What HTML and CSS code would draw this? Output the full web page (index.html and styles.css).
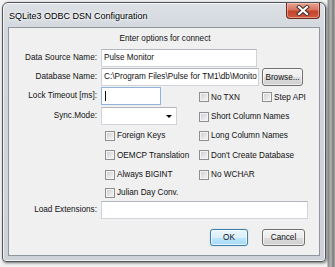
FILE: index.html
```html
<!DOCTYPE html>
<html>
<head>
<meta charset="utf-8">
<link rel="stylesheet" href="styles.css">
</head>
<body>
<div class="window">
  <div class="titlebar">
    <span class="title">SQLite3 ODBC DSN Configuration</span>
    <div class="close">
      <svg width="14" height="11" viewBox="0 0 14 11">
        <path d="M3 2 L11 9 M11 2 L3 9" stroke="#3a2a28" stroke-width="4" stroke-linecap="square"/>
        <path d="M3 2 L11 9 M11 2 L3 9" stroke="#ffffff" stroke-width="2.2" stroke-linecap="square"/>
      </svg>
    </div>
  </div>
  <div class="client">
    <div class="heading">Enter options for connect</div>
    <div class="form">
      <div class="lbl">Data Source Name:</div>
      <div class="field span3"><div class="input w-dsn">Pulse Monitor</div></div>

      <div class="lbl">Database Name:</div>
      <div class="field span3"><div class="input w-db">C:\Program Files\Pulse for TM1\db\Monito</div><div class="btn browse">Browse...</div></div>

      <div class="lbl">Lock Timeout [ms]:</div>
      <div class="field"><div class="input w-lock focus"><span class="caret"></span></div></div>
      <div class="cb"><span class="box"></span>No TXN</div>
      <div class="cb"><span class="box"></span>Step API</div>

      <div class="lbl">Sync.Mode:</div>
      <div class="field"><div class="input select"><span class="arrow"></span></div></div>
      <div class="cb span2"><span class="box"></span>Short Column Names</div>

      <div class="lbl"></div>
      <div class="cb indent"><span class="box"></span>Foreign Keys</div>
      <div class="cb span2"><span class="box"></span>Long Column Names</div>

      <div class="lbl"></div>
      <div class="cb indent"><span class="box"></span>OEMCP Translation</div>
      <div class="cb span2"><span class="box"></span>Don't Create Database</div>

      <div class="lbl"></div>
      <div class="cb indent"><span class="box"></span>Always BIGINT</div>
      <div class="cb span2"><span class="box"></span>No WCHAR</div>

      <div class="lbl"></div>
      <div class="cb indent span3"><span class="box"></span>Julian Day Conv.</div>

      <div class="lbl">Load Extensions:</div>
      <div class="field span3"><div class="input w-ext"></div></div>
    </div>
    <div class="buttons">
      <div class="btn ok">OK</div>
      <div class="btn cancel">Cancel</div>
    </div>
  </div>
</div>
</body>
</html>
```

FILE: styles.css
```css
* { box-sizing: border-box; }
html, body { margin: 0; }
body {
  width: 335px;
  height: 267px;
  padding: 2px 0 0 2px;
  background: linear-gradient(to right, #f2f2f2 0, #f2f2f2 327px, #8e8e8e 328px, #b5b5b5 331px, #7a7a7a 333px, #a8a8a8 335px);
  font-family: "Liberation Sans", Arial, sans-serif;
  font-size: 8.2px;
  color: #111;
  overflow: hidden;
}
.window {
  width: 324px;
  height: 260px;
  border: 1px solid #50555c;
  border-radius: 6px 6px 4px 4px;
  background: linear-gradient(to bottom, #dde1e6 0, #d2d7dd 30px, #cdd2d8 100%);
  box-shadow: inset 0 0 0 1px rgba(255,255,255,0.7), 1px 1px 3px rgba(0,0,0,0.55);
  padding: 0 5px 5px 5px;
  display: flex;
  flex-direction: column;
}
.titlebar {
  height: 24px;
  display: flex;
  align-items: flex-start;
  padding-left: 1px;
}
.title {
  font-family: "Liberation Sans", Arial, sans-serif;
  font-size: 9px;
  line-height: 12px;
  margin-top: 7px;
  color: #000;
  text-shadow: 0 0 5px #fff, 0 0 3px #fff;
}
.close {
  margin-left: auto;
  width: 34px;
  height: 16px;
  border: 1px solid #6e2a1e;
  border-top: none;
  border-radius: 0 0 4px 4px;
  background: linear-gradient(to bottom, #e8a493 0, #d7735e 45%, #c2442c 55%, #cf5a3f 100%);
  box-shadow: inset 0 0 0 1px rgba(255,210,200,0.5);
  display: flex;
  align-items: center;
  justify-content: center;
}
.close svg { display: block; }
.client {
  flex: 1;
  border: 1px solid #8f969e;
  background: #f0f0f0;
  display: flex;
  flex-direction: column;
}
.heading {
  margin-top: 5px;
  line-height: 12px;
  height: 12px;
  text-align: center;
  padding-left: 2px;
}
.form {
  margin-top: 4px;
  display: grid;
  grid-template-columns: 92px 98px 63px 1fr;
  grid-template-rows: 19px 19px 20px 19px 19px 20px 19px 17px 18px;
}
.lbl {
  text-align: right;
  padding-right: 4px;
  line-height: 18px;
  white-space: nowrap;
}
.field { display: flex; align-items: flex-start; }
.span2 { grid-column: span 2; }
.span3 { grid-column: span 3; }
.input {
  height: 18px;
  background: #fff;
  border: 1px solid #d0d4da;
  border-top-color: #b3b6bc;
  line-height: 16px;
  padding-left: 2px;
  white-space: nowrap;
  overflow: hidden;
  position: relative;
}
.w-dsn { width: 156px; }
.w-db { width: 158px; }
.w-lock { width: 60px; }
.w-ext { width: 207px; }
.focus { border-color: #8fb3da; }
.caret {
  position: absolute;
  left: 3px;
  top: 3px;
  width: 1px;
  height: 10px;
  background: #000;
}
.select { width: 76px; }
.arrow {
  position: absolute;
  right: 4px;
  top: 7px;
  width: 0;
  height: 0;
  border-left: 3px solid transparent;
  border-right: 3px solid transparent;
  border-top: 3px solid #000;
}
.cb {
  display: flex;
  align-items: center;
  white-space: nowrap;
  height: 100%;
}
.indent { padding-left: 4px; }
.box {
  width: 10px;
  height: 10px;
  border: 1px solid #8e8f8f;
  background: linear-gradient(135deg, #c9ccd1 0, #e6e7e9 60%, #f7f7f7 100%);
  box-shadow: inset 0 0 0 1px #f3f3f3;
  margin-right: 2px;
  flex: none;
}
.btn {
  border: 1px solid #707070;
  border-radius: 3px;
  background: linear-gradient(to bottom, #f4f4f4 0, #ececec 50%, #dddddd 51%, #cfcfcf 100%);
  box-shadow: inset 0 0 0 1px rgba(255,255,255,0.6);
  display: flex;
  align-items: center;
  justify-content: center;
  white-space: nowrap;
}
.browse {
  width: 41px;
  height: 18px;
  margin-left: 3px;
}
.buttons {
  display: flex;
  justify-content: flex-end;
  gap: 14px;
  margin-top: 10px;
  padding-right: 14px;
}
.ok, .cancel { height: 17px; }
.ok {
  width: 38px;
  border-color: #3c7fb1;
  background: linear-gradient(to bottom, #eaf6fd 0, #d9f0fc 50%, #bee6fd 51%, #a7d9f5 100%);
  box-shadow: inset 0 0 0 1px rgba(255,255,255,0.7), 0 0 1px #6ab;
}
.cancel { width: 43px; }
```
